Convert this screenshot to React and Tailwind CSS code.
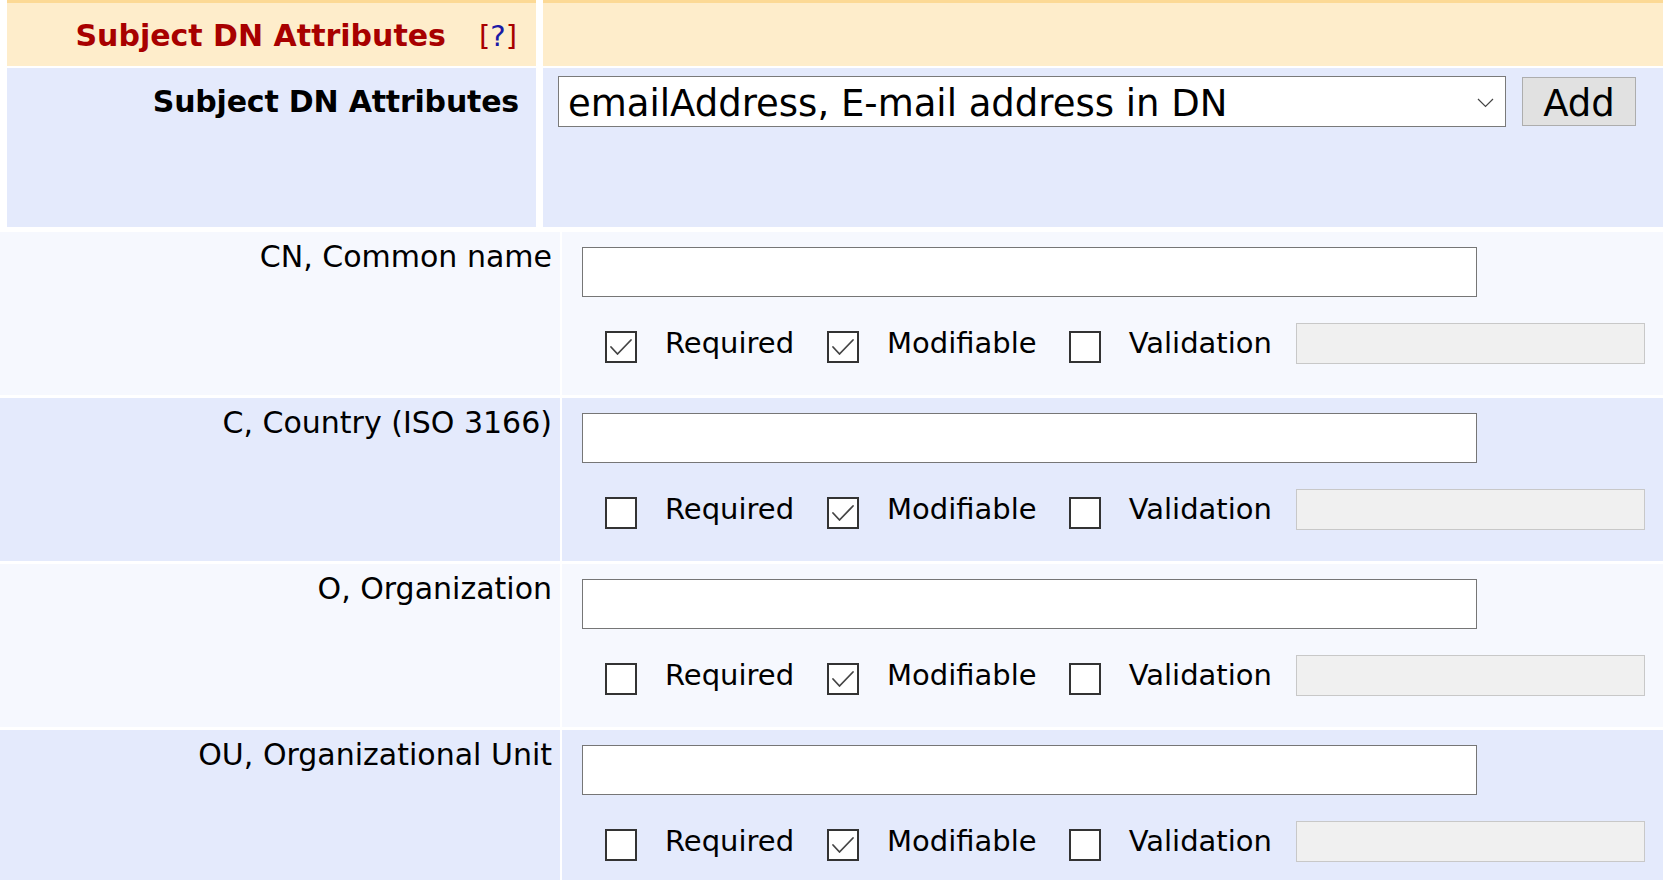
import { useState } from "react"

const rows = [
  { label: "CN, Common name", required: true, modifiable: true, validation: false, bg: "bg-[#f6f8fe]" },
  { label: "C, Country (ISO 3166)", required: false, modifiable: true, validation: false, bg: "bg-[#e4eafc]" },
  { label: "O, Organization", required: false, modifiable: true, validation: false, bg: "bg-[#f6f8fe]" },
  { label: "OU, Organizational Unit", required: false, modifiable: true, validation: false, bg: "bg-[#e4eafc]" }
]

const CheckBox = ({ checked, onChange, className = "" }) => {
  return (
    <div
      onClick={onChange}
      className={`w-[32px] h-[32px] shrink-0 border-2 border-[#333] bg-white flex items-center justify-center cursor-pointer ${className}`}
    >
      {checked && (
        <svg width="28" height="28" viewBox="0 0 28 28" fill="none">
          <path d="M4 14 L10.5 21 L24 7" stroke="#444" strokeWidth="1.8" strokeLinecap="round" strokeLinejoin="round" />
        </svg>
      )}
    </div>
  )
}

const AttributeRow = ({ row }) => {
  const [required, setRequired] = useState(row.required)
  const [modifiable, setModifiable] = useState(row.modifiable)
  const [validation, setValidation] = useState(row.validation)

  return (
    <div className="flex gap-[2px] h-[163px]">
      <div className={`w-[560px] shrink-0 ${row.bg} text-right pr-[8px] pt-[8px] text-[30px] leading-[34px]`}>{row.label}</div>
      <div className={`flex-1 ${row.bg} pl-[20px] pt-[15px]`}>
        <input type="text" className="block w-[895px] h-[50px] border border-[#767676] bg-white outline-none px-2 text-[29px]" />
        <div className="mt-[26px] ml-[23px] flex items-start text-[29px] leading-[34px]">
          <CheckBox checked={required} onChange={() => setRequired(!required)} className="mt-[8px]" />
          <span className="ml-[28px] mt-[3px]">Required</span>
          <CheckBox checked={modifiable} onChange={() => setModifiable(!modifiable)} className="ml-[33px] mt-[8px]" />
          <span className="ml-[28px] mt-[3px]">Modifiable</span>
          <CheckBox checked={validation} onChange={() => setValidation(!validation)} className="ml-[32px] mt-[8px]" />
          <span className="ml-[28px] mt-[3px]">Validation</span>
          <input
            type="text"
            disabled={!validation}
            className="ml-[24px] w-[349px] h-[41px] border border-[#c8c8c8] bg-[#f0f0f0] outline-none"
          />
        </div>
      </div>
    </div>
  )
}

export default function App() {
  const [attribute, setAttribute] = useState("emailAddress")

  return (
    <div className="w-full h-[880px] overflow-hidden bg-white text-black font-['DejaVu_Sans',sans-serif]">
      <div className="pl-[7px] flex flex-col gap-[2px]">
        <div className="flex gap-[7px] h-[66px]">
          <div className="w-[529px] shrink-0 border-t-[3px] border-[#fcd995] bg-[#feedcb] flex items-center justify-end pr-[19px]">
            <span className="text-[30px] font-bold text-[#a80000] leading-[34px] pt-[2px]">Subject DN Attributes</span>
            <span className="ml-[33px] text-[29px] leading-[34px] pt-[2px] text-[#a80000]">
              [<span className="text-[#1a1aa6]">?</span>]
            </span>
          </div>
          <div className="flex-1 border-t-[3px] border-[#fcd995] bg-[#feedcb]" />
        </div>
        <div className="flex gap-[7px] h-[159px]">
          <div className="w-[529px] shrink-0 bg-[#e4eafc] text-right pr-[17px] pt-[17px] text-[30px] font-bold leading-[34px] tracking-[-0.2px]">
            Subject DN Attributes
          </div>
          <div className="flex-1 bg-[#e4eafc] pl-[15px] pt-[8px] flex items-start gap-[16px]">
            <div className="relative w-[948px] h-[51px]">
              <select
                value={attribute}
                onChange={(e) => setAttribute(e.target.value)}
                className="appearance-none w-full h-full border border-[#7a7a7a] bg-white pl-[9px] pt-[3px] text-[37px] leading-[45px] outline-none"
              >
                <option value="emailAddress">emailAddress, E-mail address in DN</option>
                <option value="UID">UID, Unique Identifier</option>
                <option value="SN">SN, Serial number (in DN)</option>
              </select>
              <svg
                className="absolute right-[12px] top-[22px] pointer-events-none"
                width="17"
                height="10"
                viewBox="0 0 17 10"
                fill="none"
              >
                <path d="M1 1 L8.5 8.5 L16 1" stroke="#444" strokeWidth="1.2" />
              </svg>
            </div>
            <button className="mt-[1px] w-[114px] h-[49px] bg-[#e1e1e1] border border-[#adadad] text-[37px] leading-[45px] pt-[3px]">
              Add
            </button>
          </div>
        </div>
      </div>
      <div className="mt-[5px] flex flex-col gap-[3px]">
        {rows.map((row) => (
          <AttributeRow key={row.label} row={row} />
        ))}
      </div>
    </div>
  )
}
